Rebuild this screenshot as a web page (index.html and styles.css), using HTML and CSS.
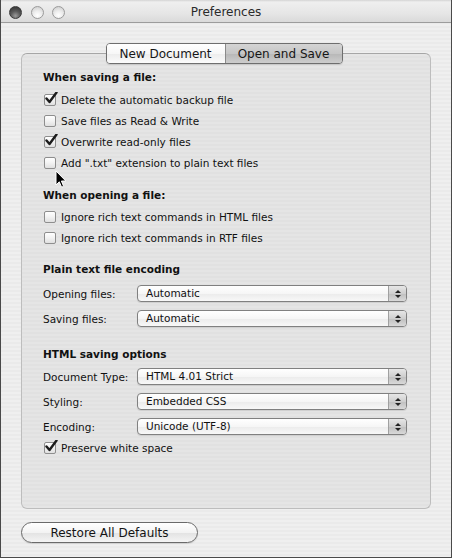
FILE: index.html
```html
<!DOCTYPE html>
<html>
<head>
<meta charset="utf-8">
<title>Preferences</title>
<link rel="stylesheet" href="styles.css">
</head>
<body>
<div class="window">
  <div class="titlebar">
    <div class="lights"><span class="light close"></span><span class="light"></span><span class="light"></span></div>
    <div class="title">Preferences</div>
    <div></div>
  </div>
  <div class="main">
    <div class="tabs">
      <div class="tab">New Document</div>
      <div class="tab selected">Open and Save</div>
    </div>
    <div class="box">
      <div class="heading">When saving a file:</div>
      <div class="group g1">
        <div class="check"><span class="cb on"><svg class="tick" viewBox="0 0 14 14"><path d="M2.5 6.5 L5.5 10 L12.5 0.5"/></svg></span>Delete the automatic backup file</div>
        <div class="check"><span class="cb"></span>Save files as Read &amp; Write</div>
        <div class="check"><span class="cb on"><svg class="tick" viewBox="0 0 14 14"><path d="M2.5 6.5 L5.5 10 L12.5 0.5"/></svg></span>Overwrite read-only files</div>
        <div class="check"><span class="cb"></span>Add ".txt" extension to plain text files</div>
      </div>
      <div class="heading h2">When opening a file:</div>
      <div class="group g2">
        <div class="check"><span class="cb"></span>Ignore rich text commands in HTML files</div>
        <div class="check"><span class="cb"></span>Ignore rich text commands in RTF files</div>
      </div>
      <div class="heading h3">Plain text file encoding</div>
      <div class="prow p1"><span class="plabel">Opening files:</span><div class="popup"><span class="val">Automatic</span><span class="arrows"><i class="up"></i><i class="down"></i></span></div></div>
      <div class="prow"><span class="plabel">Saving files:</span><div class="popup"><span class="val">Automatic</span><span class="arrows"><i class="up"></i><i class="down"></i></span></div></div>
      <div class="heading h4">HTML saving options</div>
      <div class="prow p2"><span class="plabel">Document Type:</span><div class="popup"><span class="val">HTML 4.01 Strict</span><span class="arrows"><i class="up"></i><i class="down"></i></span></div></div>
      <div class="prow"><span class="plabel">Styling:</span><div class="popup"><span class="val">Embedded CSS</span><span class="arrows"><i class="up"></i><i class="down"></i></span></div></div>
      <div class="prow"><span class="plabel">Encoding:</span><div class="popup"><span class="val">Unicode (UTF-8)</span><span class="arrows"><i class="up"></i><i class="down"></i></span></div></div>
      <div class="check last"><span class="cb on"><svg class="tick" viewBox="0 0 14 14"><path d="M2.5 6.5 L5.5 10 L12.5 0.5"/></svg></span>Preserve white space</div>
    </div>
    <div class="button">Restore All Defaults</div>
  </div>
  <svg class="cursor" width="12" height="19" viewBox="0 0 12 19"><path d="M1 1 L1 15 L4.3 11.8 L6.6 17.2 L8.6 16.3 L6.4 11 L10.8 11 Z"/></svg>
</div>
</body>
</html>
```

FILE: styles.css
```css
html, body {
  margin: 0;
  padding: 0;
  background: #ececec;
}
body {
  font-family: "DejaVu Sans", "Liberation Sans", sans-serif;
  font-size: 10.5px;
  color: #111;
}
.window {
  position: relative;
  width: 452px;
  height: 558px;
  box-sizing: border-box;
  border-left: 1px solid #4a4a4a;
  border-right: 1px solid #4a4a4a;
  border-bottom: 1px solid #4a4a4a;
  background: repeating-linear-gradient(to bottom, #efefef 0 2px, #eaeaea 2px 4px);
  display: flex;
  flex-direction: column;
  overflow: hidden;
}
.titlebar {
  height: 22px;
  border-bottom: 1px solid #9c9c9c;
  background: linear-gradient(to bottom, #d4d4d4 0, #efefef 2px, #e6e6e6 60%, #dadada 100%);
  display: grid;
  grid-template-columns: 1fr auto 1fr;
  align-items: center;
}
.lights {
  display: flex;
  gap: 8.5px;
  padding-left: 8px;
  padding-top: 2px;
}
.light {
  width: 13px;
  height: 13px;
  box-sizing: border-box;
  border-radius: 50%;
  border: 1px solid #9a9a9a;
  background: radial-gradient(circle at 50% 75%, #ffffff 0, #eeeeee 40%, #c9c9c9 100%);
}
.light.close {
  border-color: #3a3a3a;
  background: radial-gradient(circle at 50% 80%, #9a9a9a 0, #5a5a5a 45%, #2e2e2e 100%);
}
.title {
  font-size: 12px;
  color: #2a2a2a;
  padding-top: 1px;
}
.main {
  flex: 1;
  padding: 20px 20px 0 20px;
  display: flex;
  flex-direction: column;
}
.tabs {
  position: relative;
  z-index: 1;
  align-self: center;
  display: flex;
  height: 21px;
  box-sizing: border-box;
  border: 1px solid #6e6e6e;
  border-radius: 4px;
  overflow: hidden;
  margin-left: -4px;
  font-size: 12px;
  color: #161616;
  box-shadow: 0 1px 1px rgba(0,0,0,0.12);
}
.tab {
  display: flex;
  align-items: center;
  justify-content: center;
  height: 100%;
  background: linear-gradient(to bottom, #ffffff 0, #f7f7f7 50%, #ececec 51%, #fbfbfb 100%);
}
.tab:first-child {
  width: 118px;
}
.tab.selected {
  width: 116px;
  border-left: 1px solid #8a8a8a;
  background: linear-gradient(to bottom, #d4d4d4 0, #c6c6c6 50%, #b7b7b7 51%, #cdcdcd 100%);
}
.box {
  margin-top: -11px;
  height: 456px;
  box-sizing: border-box;
  border: 1px solid #bdbdbd;
  border-top-color: #a6a6a6;
  border-radius: 6px;
  background: repeating-linear-gradient(to bottom, #e5e5e5 0 2px, #e1e1e1 2px 4px);
  padding: 16px 20px 0 21px;
  display: flex;
  flex-direction: column;
}
.heading {
  font-weight: bold;
  line-height: 14px;
  height: 14px;
}
.h2 { margin-top: 15px; }
.h3 { margin-top: 14px; }
.h4 { margin-top: 20px; }
.g1 { margin-top: 5px; }
.g2 { margin-top: 4px; }
.check {
  height: 21px;
  display: flex;
  align-items: center;
}
.check.last {
  margin-top: 2px;
}
.cb {
  position: relative;
  width: 12px;
  height: 12px;
  box-sizing: border-box;
  border: 1px solid #8e8e8e;
  border-radius: 2px;
  background: linear-gradient(to bottom, #ffffff 0, #f2f2f2 50%, #e0e0e0 100%);
  margin: 0 5px 0 1px;
  flex: none;
}
.tick {
  position: absolute;
  left: -1px;
  top: -3px;
  width: 14px;
  height: 14px;
  fill: none;
  stroke: #1c1c1c;
  stroke-width: 2.4;
  stroke-linecap: round;
  stroke-linejoin: round;
}
.prow {
  display: flex;
  align-items: center;
  height: 17px;
  margin-top: 8px;
}
.prow.p1 { margin-top: 9px; }
.prow.p2 { margin-top: 7px; }
.plabel {
  width: 94px;
  flex: none;
}
.popup {
  width: 270px;
  height: 17px;
  box-sizing: border-box;
  border: 1px solid #808080;
  border-radius: 4px;
  background: linear-gradient(to bottom, #ffffff 0, #f6f6f6 50%, #ebebeb 51%, #f8f8f8 100%);
  display: flex;
  overflow: hidden;
  box-shadow: 0 1px 1px rgba(0,0,0,0.1);
}
.val {
  flex: 1;
  padding-left: 8px;
  line-height: 15px;
}
.arrows {
  width: 17px;
  border-left: 1px solid #a0a0a0;
  background: linear-gradient(to bottom, #e6e6e6 0, #cfcfcf 50%, #bfbfbf 51%, #d9d9d9 100%);
  display: flex;
  flex-direction: column;
  align-items: center;
  justify-content: center;
  gap: 2px;
}
.up, .down {
  width: 0;
  height: 0;
  border-left: 3px solid transparent;
  border-right: 3px solid transparent;
}
.up { border-bottom: 3.5px solid #222; }
.down { border-top: 3.5px solid #222; }
.button {
  margin-top: 13px;
  width: 177px;
  height: 21px;
  box-sizing: border-box;
  border: 1px solid #6a6a6a;
  border-radius: 11px;
  background: linear-gradient(to bottom, #ffffff 0, #f3f3f3 50%, #e2e2e2 51%, #f4f4f4 100%);
  display: flex;
  align-items: center;
  justify-content: center;
  font-size: 12px;
  color: #141414;
  box-shadow: 0 1px 1px rgba(0,0,0,0.12);
}
.cursor {
  position: absolute;
  left: 54px;
  top: 170px;
}
.cursor path {
  fill: #000;
  stroke: #fff;
  stroke-width: 1;
  stroke-linejoin: round;
}
```
